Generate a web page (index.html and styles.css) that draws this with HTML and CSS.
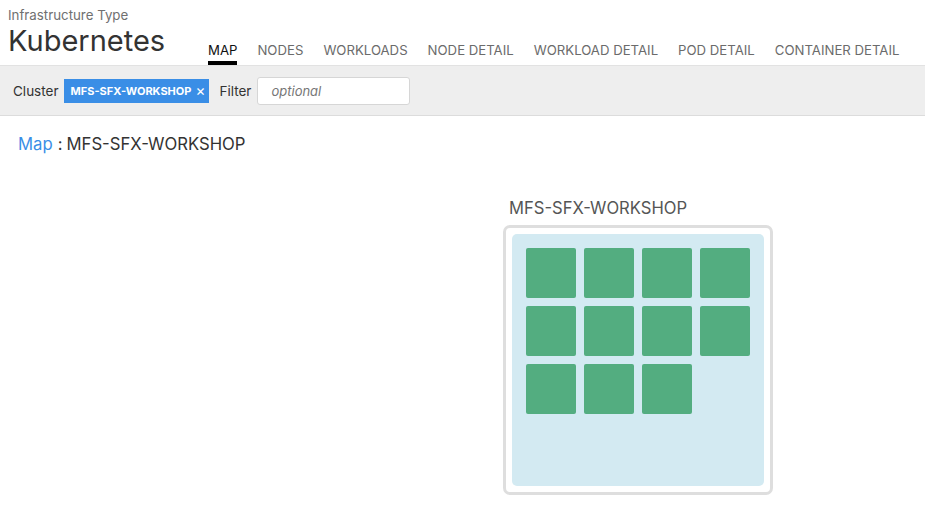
FILE: index.html
```html
<!DOCTYPE html>
<html>
<head>
<meta charset="utf-8">
<link rel="stylesheet" href="styles.css">
</head>
<body>
<header class="header">
  <div class="title-block">
    <div class="subtitle">Infrastructure Type</div>
    <h1 class="title">Kubernetes</h1>
  </div>
  <nav class="tabs">
    <a class="tab active">MAP</a>
    <a class="tab">NODES</a>
    <a class="tab">WORKLOADS</a>
    <a class="tab">NODE DETAIL</a>
    <a class="tab">WORKLOAD DETAIL</a>
    <a class="tab">POD DETAIL</a>
    <a class="tab">CONTAINER DETAIL</a>
  </nav>
</header>
<div class="filter-bar">
  <span class="label">Cluster</span>
  <span class="chip">MFS-SFX-WORKSHOP <span class="chip-x">×</span></span>
  <span class="label filter-label">Filter</span>
  <input class="filter-input" type="text" placeholder="optional">
</div>
<div class="breadcrumb"><a class="crumb-link">Map</a><span class="crumb-sep">:</span><span class="crumb-current">MFS-SFX-WORKSHOP</span></div>
<div class="map">
  <div class="cluster">
    <div class="cluster-name">MFS-SFX-WORKSHOP</div>
    <div class="cluster-box">
      <div class="cluster-inner">
        <div class="node"></div><div class="node"></div><div class="node"></div><div class="node"></div>
        <div class="node"></div><div class="node"></div><div class="node"></div><div class="node"></div>
        <div class="node"></div><div class="node"></div><div class="node"></div>
      </div>
    </div>
  </div>
</div>
</body>
</html>
```
FILE: styles.css
```css
* { box-sizing: border-box; }
body {
  margin: 0;
  font-family: Inter, "Noto Sans", sans-serif;
  color: #333;
  background: #fff;
}
.header {
  display: flex;
  align-items: flex-end;
  height: 66px;
  border-bottom: 1px solid #e2e2e2;
  padding-left: 8px;
}
.title-block {
  width: 200px;
  align-self: stretch;
  padding-top: 8px;
}
.subtitle {
  font-size: 13.3px;
  color: #707070;
  line-height: 15px;
}
.title {
  margin: 0;
  font-size: 29px;
  font-weight: 400;
  color: #333;
  line-height: 36px;
}
.tabs {
  display: flex;
  gap: 20px;
}
.tab {
  font-size: 13.2px;
  color: #6b6b6b;
  line-height: 16px;
  padding-bottom: 3px;
  border-bottom: 4px solid transparent;
}
.tab.active {
  color: #111;
  border-bottom-color: #000;
}
.filter-bar {
  display: flex;
  align-items: center;
  height: 50px;
  background: #eeeeee;
  border-bottom: 1px solid #dcdcdc;
  padding-left: 13px;
  font-size: 13.5px;
}
.label { color: #333; margin-right: 6px; }
.filter-label { margin-left: 10px; }
.chip {
  display: inline-flex;
  align-items: center;
  height: 24px;
  width: 145px;
  padding-left: 6px;
  background: #3a8ee6;
  color: #fff;
  font-size: 11px;
  font-weight: 700;
}
.chip-x {
  font-weight: 400;
  font-size: 15px;
  margin-left: 4px;
}
.filter-input {
  width: 153px;
  height: 28px;
  border: 1px solid #d6d6d6;
  border-radius: 3px;
  background: #fff;
  padding: 0 0 0 13px;
  font-family: Inter, sans-serif;
  font-size: 13px;
  outline: none;
}
.filter-input::placeholder {
  color: #777;
  font-style: italic;
}
.breadcrumb {
  padding: 18px 0 0 18px;
  font-size: 16.7px;
  line-height: 20px;
}
.crumb-link { color: #3a8ee6; }
.crumb-sep { margin: 0 4px 0 5px; color: #333; }
.crumb-current { color: #333; }
.map {
  padding: 44px 0 0 503px;
}
.cluster-name {
  padding-left: 6px;
  font-size: 16.6px;
  color: #555;
  line-height: 20px;
  margin-bottom: 7px;
}
.cluster-box {
  width: 270px;
  height: 270px;
  border: 3px solid #dedede;
  border-radius: 7px;
  padding: 6px;
  background: #fff;
}
.cluster-inner {
  width: 252px;
  height: 252px;
  background: #d3eaf2;
  border-radius: 5px;
  padding: 14px;
  display: grid;
  grid-template-columns: repeat(4, 50px);
  grid-auto-rows: 50px;
  gap: 8px;
  align-content: start;
}
.node {
  background: #53ad80;
  border-radius: 2px;
}
```
